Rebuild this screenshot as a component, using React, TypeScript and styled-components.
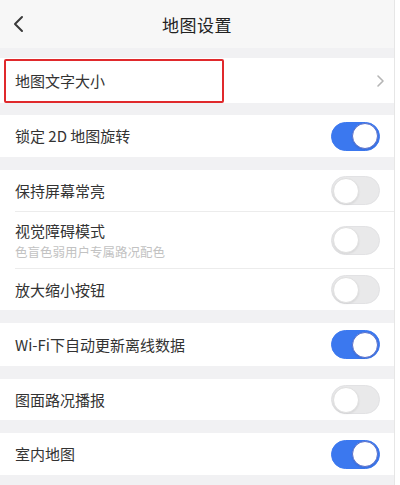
import React from 'react';
import styled, { createGlobalStyle } from 'styled-components';

const GlobalStyle = createGlobalStyle`
  html, body {
    margin: 0;
    padding: 0;
    background: #ffffff;
  }
  body {
    font-family: "Noto Sans CJK SC", "Noto Sans", "Liberation Sans", sans-serif;
    -webkit-font-smoothing: antialiased;
  }
`;

const Page = styled.div`
  width: 394px;
  height: 485px;
  background: #f1f1f3;
  border-right: 1px solid #e6e6e6;
  display: flex;
  flex-direction: column;
  overflow: hidden;
`;

const Header = styled.header`
  height: 48px;
  flex-shrink: 0;
  background: #f7f7f7;
  display: grid;
  grid-template-columns: 60px 1fr 60px;
  align-items: center;
`;

const BackButton = styled.button`
  border: none;
  background: none;
  padding: 0 0 0 12px;
  height: 48px;
  display: flex;
  align-items: center;
  cursor: pointer;
`;

const Title = styled.h1`
  margin: 0;
  text-align: center;
  font-size: 17px;
  font-weight: 400;
  color: #222;
  letter-spacing: 0.5px;
`;

const Group = styled.section<{ gap: number }>`
  position: relative;
  margin-top: ${p => p.gap}px;
  background: #ffffff;
  flex-shrink: 0;
`;

const Row = styled.div<{ h: number; divided?: boolean; tight?: boolean }>`
  height: ${p => p.h}px;
  margin-left: 15px;
  padding-right: ${p => (p.tight ? 8 : 14)}px;
  display: flex;
  align-items: center;
  justify-content: space-between;
  box-sizing: border-box;
  border-top: ${p => (p.divided ? '1px solid #ececec' : 'none')};
`;

const LabelBox = styled.div`
  display: flex;
  flex-direction: column;
  gap: 2px;
`;

const Label = styled.span`
  font-size: 15px;
  color: #333;
  line-height: 20px;
`;

const SubLabel = styled.span`
  font-size: 12.5px;
  color: #c2c2c2;
  line-height: 17px;
`;

const Track = styled.div<{ on: boolean }>`
  width: 49px;
  height: 29px;
  border-radius: 15px;
  box-sizing: border-box;
  background: ${p => (p.on ? '#3b78ef' : '#e9e9ea')};
  border: 1px solid ${p => (p.on ? '#3b78ef' : '#e2e2e4')};
  display: flex;
  align-items: center;
  justify-content: ${p => (p.on ? 'flex-end' : 'flex-start')};
  padding: 0 1px;
`;

const Knob = styled.div<{ on: boolean }>`
  width: 26px;
  height: 26px;
  border-radius: 50%;
  background: #ffffff;
  box-sizing: border-box;
  border: 1px solid ${p => (p.on ? '#5a6fc9' : '#e0e0e0')};
  box-shadow: 0 1px 2px rgba(0, 0, 0, 0.08);
`;

const Highlight = styled.div`
  position: absolute;
  left: 4px;
  top: 1px;
  width: 220px;
  height: 44px;
  border: 2px solid #e0292c;
  border-radius: 2px;
  box-sizing: border-box;
  pointer-events: none;
`;

const Switch: React.FC<{ on: boolean }> = ({ on }) => (
  <Track on={on}>
    <Knob on={on} />
  </Track>
);

const ChevronRight = () => (
  <svg width="10" height="14" viewBox="0 0 10 14">
    <polyline points="2,2 7,7 2,12" fill="none" stroke="#b5b5b5" strokeWidth="1.6" strokeLinecap="round" strokeLinejoin="round" />
  </svg>
);

const ChevronLeft = () => (
  <svg width="14" height="18" viewBox="0 0 14 18">
    <polyline points="10,2 3,9 10,16" fill="none" stroke="#3a3a3a" strokeWidth="2" strokeLinecap="round" strokeLinejoin="round" />
  </svg>
);

interface ToggleItem {
  label: string;
  sub?: string;
  on: boolean;
  h: number;
}

const groups: { gap: number; items: ToggleItem[] }[] = [
  { gap: 12, items: [{ label: '锁定 2D 地图旋转', on: true, h: 42 }] },
  {
    gap: 13,
    items: [
      { label: '保持屏幕常亮', on: false, h: 41 },
      { label: '视觉障碍模式', sub: '色盲色弱用户专属路况配色', on: false, h: 57 },
      { label: '放大缩小按钮', on: false, h: 42 },
    ],
  },
  { gap: 13, items: [{ label: 'Wi-Fi下自动更新离线数据', on: true, h: 43 }] },
  { gap: 13, items: [{ label: '图面路况播报', on: false, h: 41 }] },
  { gap: 13, items: [{ label: '室内地图', on: true, h: 42 }] },
];

export default function App() {
  return (
    <Page>
      <GlobalStyle />
      <Header>
        <BackButton aria-label="返回">
          <ChevronLeft />
        </BackButton>
        <Title>地图设置</Title>
        <span />
      </Header>

      <Group gap={10}>
        <Row h={45} tight>
          <Label>地图文字大小</Label>
          <ChevronRight />
        </Row>
        <Highlight />
      </Group>

      {groups.map((g, gi) => (
        <Group key={gi} gap={g.gap}>
          {g.items.map((item, i) => (
            <Row key={item.label} h={item.h} divided={i > 0}>
              <LabelBox>
                <Label>{item.label}</Label>
                {item.sub && <SubLabel>{item.sub}</SubLabel>}
              </LabelBox>
              <Switch on={item.on} />
            </Row>
          ))}
        </Group>
      ))}
    </Page>
  );
}
